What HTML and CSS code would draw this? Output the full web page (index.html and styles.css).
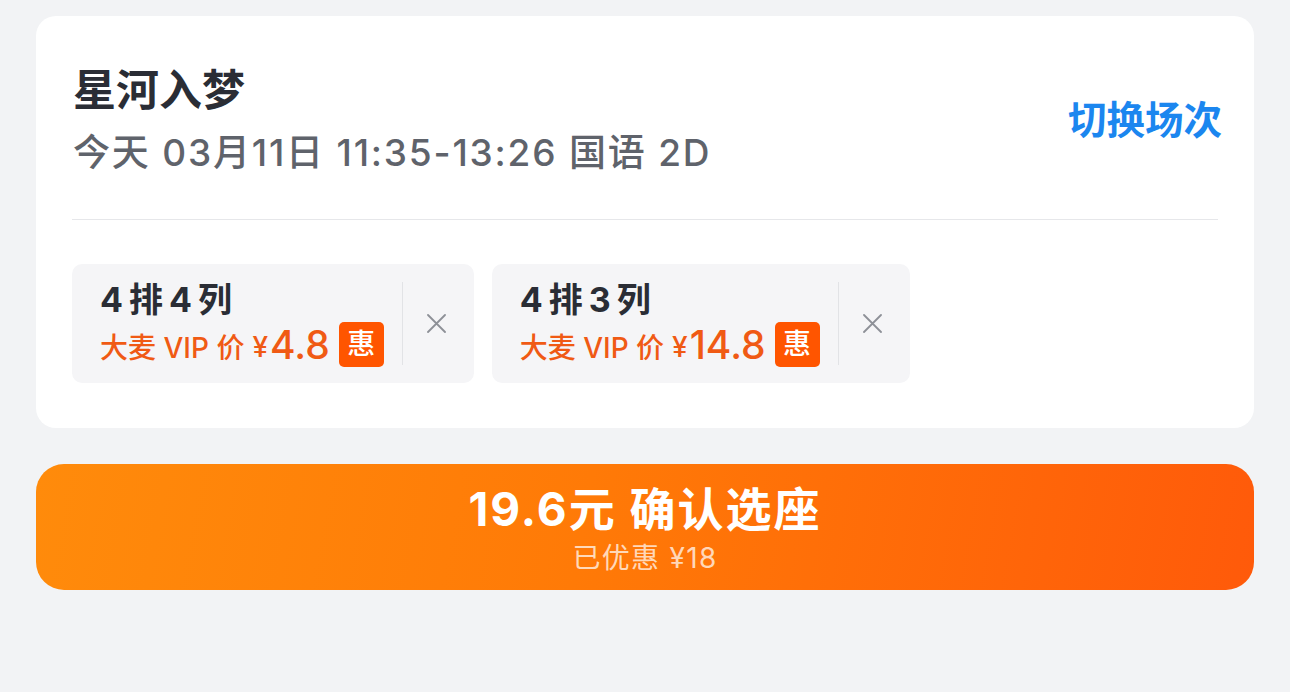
FILE: index.html
```html
<!DOCTYPE html>
<html lang="zh-CN">
<head>
<meta charset="utf-8">
<title>选座</title>
<link rel="stylesheet" href="styles.css">
</head>
<body>
<div class="page">
  <section class="card">
    <div class="show">
      <div class="show-info">
        <h1 class="movie">星河入梦</h1>
        <p class="session">今天 03月11日 11:35-13:26 国语 2D</p>
      </div>
      <a class="switch">切换场次</a>
    </div>
    <div class="divider"></div>
    <div class="seats">
      <div class="seat">
        <div class="seat-info">
          <div class="seat-pos">4<span class="cj">排</span>4<span class="cj">列</span></div>
          <div class="seat-price"><span class="label">大麦 VIP 价</span><span class="yen">¥</span><span class="amount">4.8</span><span class="badge">惠</span></div>
        </div>
        <div class="vline"></div>
        <button class="remove" aria-label="移除">
          <svg width="19" height="19" viewBox="0 0 19 19"><path d="M1 1L18 18M18 1L1 18" stroke="#8d9097" stroke-width="1.8" stroke-linecap="round" fill="none"/></svg>
        </button>
      </div>
      <div class="seat">
        <div class="seat-info">
          <div class="seat-pos">4<span class="cj">排</span>3<span class="cj">列</span></div>
          <div class="seat-price"><span class="label">大麦 VIP 价</span><span class="yen">¥</span><span class="amount">14.8</span><span class="badge">惠</span></div>
        </div>
        <div class="vline"></div>
        <button class="remove" aria-label="移除">
          <svg width="19" height="19" viewBox="0 0 19 19"><path d="M1 1L18 18M18 1L1 18" stroke="#8d9097" stroke-width="1.8" stroke-linecap="round" fill="none"/></svg>
        </button>
      </div>
    </div>
  </section>
  <button class="confirm">
    <span class="confirm-main">19.6元 确认选座</span>
    <span class="confirm-sub">已优惠 ¥18</span>
  </button>
</div>
</body>
</html>
```

FILE: styles.css
```css
* { box-sizing: border-box; margin: 0; padding: 0; }
html, body {
  background: #f2f3f5;
}
body {
  font-family: Inter, "Noto Sans CJK SC", sans-serif;
  color: #2b2e36;
}
.page {
  padding: 16px 36px 0;
  display: flex;
  flex-direction: column;
  gap: 36px;
}
.card {
  background: #ffffff;
  border-radius: 20px;
  padding: 48px 36px 45px;
}
.show {
  display: flex;
  align-items: center;
  justify-content: space-between;
  padding-bottom: 43px;
}
.show-info {
  display: flex;
  flex-direction: column;
  gap: 14px;
  padding-left: 1px;
}
.movie {
  font-size: 43px;
  line-height: 52px;
  font-weight: 700;
  color: #2a2d35;
}
.session {
  font-size: 37px;
  line-height: 46px;
  color: #5f636b;
  font-weight: 500;
  letter-spacing: 1.8px;
}
.switch {
  font-size: 38.5px;
  line-height: 50px;
  font-weight: 700;
  color: #1b86ef;
  margin-right: -4px;
}
.divider {
  height: 1px;
  background: #e6e7ea;
}
.seats {
  margin-top: 44px;
  display: flex;
  gap: 18px;
}
.seat {
  display: flex;
  align-items: center;
  height: 119px;
  background: #f5f5f7;
  border-radius: 10px;
  padding-left: 28px;
}
.seat-info {
  display: flex;
  flex-direction: column;
  gap: 2px;
}
.seat-pos {
  font-size: 34px;
  line-height: 40px;
  font-weight: 700;
  color: #2a2d35;
}
.seat-pos .cj {
  margin: 0 6px;
}
.seat-price {
  display: flex;
  align-items: center;
  height: 46px;
  color: #f05a14;
}
.label {
  font-size: 28px;
  line-height: 46px;
  padding-top: 6px;
  font-weight: 500;
}
.yen {
  font-size: 28px;
  line-height: 46px;
  margin-left: 8px;
  padding-top: 4px;
  font-weight: 500;
}
.amount {
  font-size: 39px;
  line-height: 46px;
  font-weight: 500;
  margin-left: 2px;
}
.badge {
  margin-left: 9px;
  width: 45px;
  height: 45px;
  border-radius: 5px;
  background: #ff5500;
  color: #ffffff;
  font-size: 28px;
  line-height: 45px;
  text-align: center;
  font-weight: 500;
}
.vline {
  width: 1px;
  height: 83px;
  background: #e2e3e6;
  margin-left: 18px;
}
.remove {
  border: 0;
  background: transparent;
  width: 71px;
  height: 40px;
  display: flex;
  align-items: center;
  justify-content: center;
  padding-right: 4px;
}
.confirm {
  height: 126px;
  border: 0;
  border-radius: 28px;
  background: linear-gradient(100deg, #ff8b0b 0%, #ff7a07 45%, #ff5a0a 100%);
  display: flex;
  flex-direction: column;
  align-items: center;
  justify-content: center;
  gap: 4px;
  color: #ffffff;
  font-family: Inter, "Noto Sans CJK SC", sans-serif;
  padding-top: 4px;
}
.confirm-main {
  font-size: 46px;
  line-height: 54px;
  font-weight: 700;
  letter-spacing: 2px;
}
.confirm-sub {
  font-size: 28px;
  line-height: 36px;
  color: rgba(255, 255, 255, 0.72);
  letter-spacing: 1.3px;
}
```
